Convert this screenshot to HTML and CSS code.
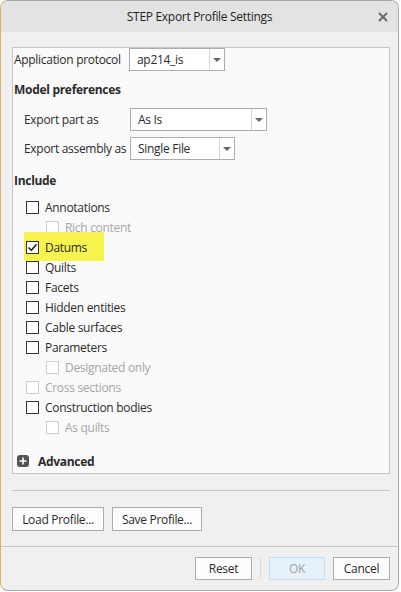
FILE: index.html
```html
<!DOCTYPE html>
<html lang="en">
<head>
<meta charset="utf-8">
<title>STEP Export Profile Settings</title>
<link rel="stylesheet" href="styles.css">
</head>
<body>
<div class="dialog">
  <div class="titlebar">
    <span class="title">STEP Export Profile Settings</span>
    <svg class="close" width="10" height="10" viewBox="0 0 10 10"><path d="M1 1L9 9M9 1L1 9" stroke="#6b6b6b" stroke-width="2"/></svg>
  </div>
  <div class="content">
    <div class="panel">
      <div class="field field-top">
        <span class="label label-proto">Application protocol</span>
        <div class="combo combo-proto"><span class="combo-text">ap214_is</span><span class="combo-btn"><i class="caret"></i></span></div>
      </div>
      <div class="heading heading-model">Model preferences</div>
      <div class="field field-part">
        <span class="label label-sub">Export part as</span>
        <div class="combo combo-part"><span class="combo-text">As Is</span><span class="combo-btn"><i class="caret"></i></span></div>
      </div>
      <div class="field field-asm">
        <span class="label label-sub">Export assembly as</span>
        <div class="combo combo-asm"><span class="combo-text">Single File</span><span class="combo-btn"><i class="caret"></i></span></div>
      </div>
      <div class="heading heading-include">Include</div>
      <ul class="checks">
        <li class="check"><span class="box"></span>Annotations</li>
        <li class="check sub disabled"><span class="box"></span>Rich content</li>
        <li class="check marked"><span class="box"><svg width="11" height="11" viewBox="0 0 11 11"><path d="M1.5 5.5L4.3 8.3L9.5 2.2" fill="none" stroke="#222" stroke-width="1.5"/></svg></span>Datums</li>
        <li class="check"><span class="box"></span>Quilts</li>
        <li class="check"><span class="box"></span>Facets</li>
        <li class="check"><span class="box"></span>Hidden entities</li>
        <li class="check"><span class="box"></span>Cable surfaces</li>
        <li class="check"><span class="box"></span>Parameters</li>
        <li class="check sub disabled"><span class="box"></span>Designated only</li>
        <li class="check disabled"><span class="box"></span>Cross sections</li>
        <li class="check"><span class="box"></span>Construction bodies</li>
        <li class="check sub disabled"><span class="box"></span>As quilts</li>
      </ul>
      <div class="advanced">
        <svg class="expander" width="12" height="12" viewBox="0 0 12 12"><rect width="12" height="12" rx="3" fill="#555"/><path d="M6 2.5V9.5M2.5 6H9.5" stroke="#fff" stroke-width="1.6"/></svg>
        <span>Advanced</span>
      </div>
    </div>
    <hr class="sep sep-inner">
    <div class="profile-buttons">
      <button class="btn btn-load">Load Profile...</button>
      <button class="btn btn-save">Save Profile...</button>
    </div>
  </div>
  <hr class="sep sep-full">
  <div class="footer">
    <button class="btn btn-reset">Reset</button>
    <span class="vsep"></span>
    <button class="btn btn-ok" disabled>OK</button>
    <button class="btn btn-cancel">Cancel</button>
  </div>
</div>
</body>
</html>
```

FILE: styles.css
```css
* { box-sizing: border-box; }

html, body {
  margin: 0;
  padding: 0;
  background: #ffffff;
}

body {
  font-family: "Open Sans", "Noto Sans", sans-serif;
  font-size: 12px;
  color: #2b2b2b;
  width: 401px;
  height: 592px;
  overflow: hidden;
  letter-spacing: -0.3px;
}

.dialog {
  width: 399px;
  height: 591px;
  border: 1px solid #a9a9a9;
  border-radius: 8px;
  background: #f0f0f0;
  overflow: hidden;
  display: flex;
  flex-direction: column;
  border-left-color: #d9b36a;
}

.titlebar {
  height: 31px;
  flex: none;
  background: #e3e3e3;
  display: flex;
  align-items: center;
  justify-content: center;
  position: relative;
}

.title {
  font-size: 12px;
  color: #1f1f1f;
}

.close {
  position: absolute;
  right: 10px;
  top: 11px;
}

.content {
  padding: 15px 8px 0 11px;
  flex: none;
}

.panel {
  background: #fafafa;
  border: 1px solid #c6c6c6;
  height: 427px;
  padding-left: 1px;
}

.field {
  display: flex;
  align-items: center;
  height: 23px;
}

.label-proto { width: 115px; }
.label-sub { padding-left: 10px; width: 116px; }

.combo {
  height: 23px;
  border: 1px solid #acacac;
  background: #ffffff;
  display: flex;
}

.combo-text {
  flex: 1;
  padding-left: 7px;
  line-height: 21px;
}

.combo-btn {
  width: 15px;
  border-left: 1px solid #d4d4d4;
  display: flex;
  align-items: center;
  justify-content: center;
}

.caret {
  width: 0;
  height: 0;
  border-left: 4px solid transparent;
  border-right: 4px solid transparent;
  border-top: 4px solid #666;
}

.combo-proto { width: 96px; }
.combo-part { width: 137px; }
.combo-asm { width: 105px; }

.field-part { margin-top: 8px; }
.field-asm { margin-top: 6px; }

.heading {
  font-weight: 700;
  line-height: 20px;
}

.heading-model { margin-top: 9px; margin-bottom: 8px; }
.heading-include { margin-top: 11px; margin-bottom: 6px; }

.checks {
  list-style: none;
  margin: 0;
  padding: 0 0 0 12px;
}

.check {
  height: 20px;
  display: flex;
  align-items: center;
  position: relative;
}

.check .box {
  width: 13px;
  height: 13px;
  border: 1px solid #333;
  background: #fff;
  margin-right: 6px;
  display: flex;
  align-items: center;
  justify-content: center;
  flex: none;
}

.check.sub { padding-left: 20px; }

.check.disabled { color: #a6a6a6; }
.check.disabled .box { border-color: #cfcfcf; }

/* yellow marker behind the Datums row */
.check.marked { isolation: isolate; }
.check.marked::before {
  content: "";
  position: absolute;
  left: -2px;
  top: -5px;
  width: 80px;
  height: 29px;
  background: #f7f44d;
  z-index: -1;
}

.advanced {
  margin-top: 14px;
  height: 20px;
  display: flex;
  align-items: center;
  padding-left: 3px;
  font-weight: 700;
}

.expander { margin-right: 9px; }

.sep {
  border: none;
  margin: 0;
  height: 1px;
  background: #c8c8c8;
}

.sep-inner { margin-top: 16px; }

.profile-buttons {
  display: flex;
  gap: 8px;
  margin-top: 16px;
  height: 24px;
}

.btn {
  font-family: inherit;
  font-size: 12px;
  letter-spacing: inherit;
  color: #2b2b2b;
  background: #fdfdfd;
  border: 1px solid #adadad;
  padding: 0;
  height: 24px;
}

.btn-load { width: 92px; }
.btn-save { width: 90px; }

.sep-full { margin-top: 15px; }

.footer {
  display: flex;
  align-items: center;
  justify-content: flex-end;
  padding: 10px 8px 0 0;
}

.btn-reset, .btn-ok, .btn-cancel { width: 57px; height: 23px; }
.btn-ok {
  width: 56px;
  background: #e5f1fb;
  border-color: #c4e0f5;
  color: #a3a3a3;
  margin-right: 8px;
}

.vsep {
  width: 1px;
  height: 22px;
  background: #dcdcdc;
  margin: 0 8px;
}
```
